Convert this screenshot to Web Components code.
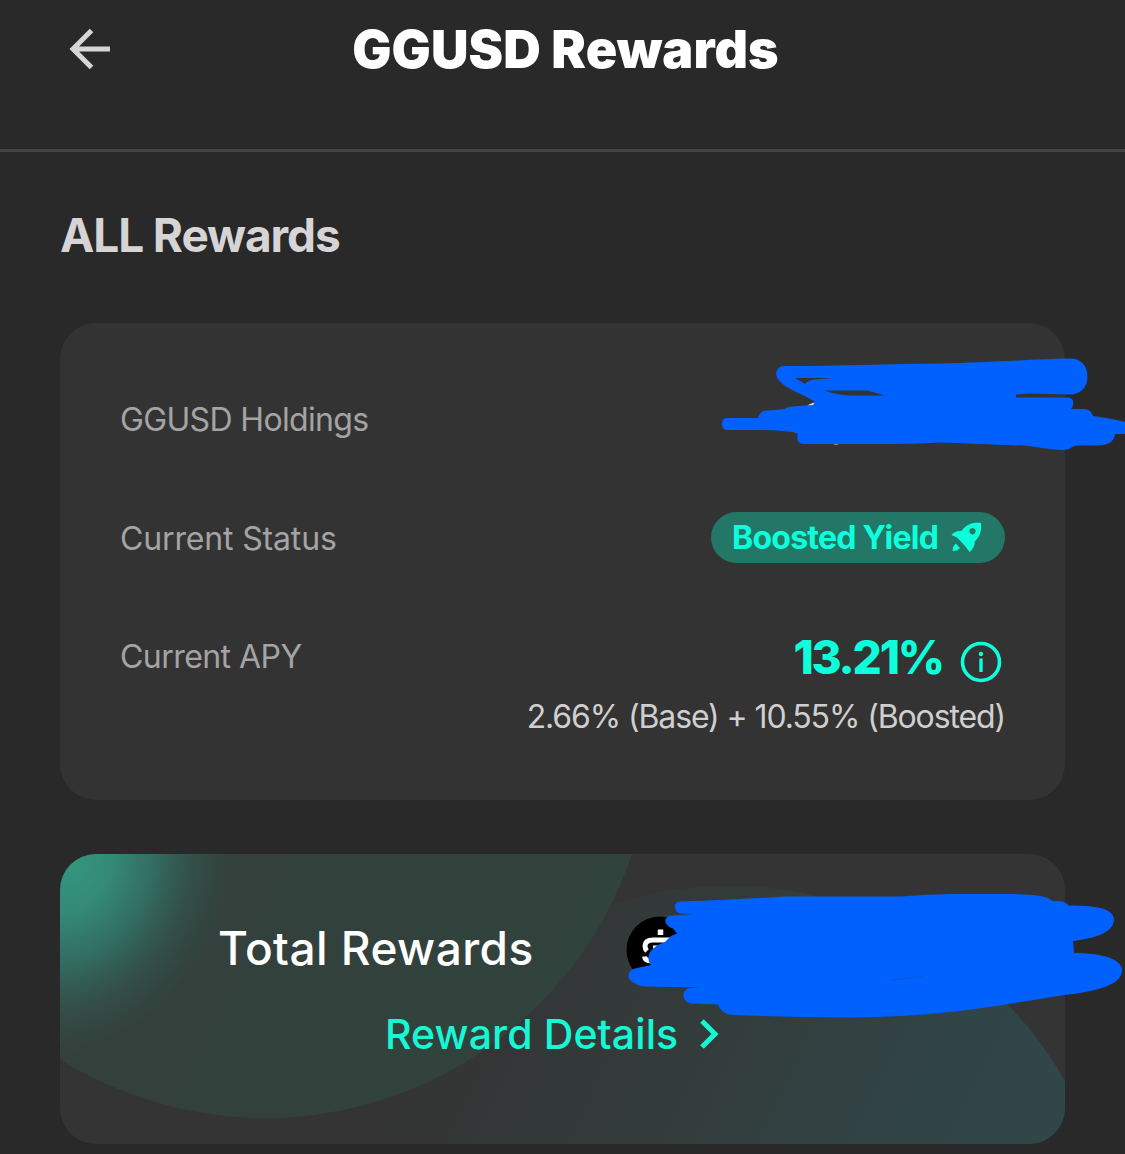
<!DOCTYPE html>
<html lang="en">
<head>
<meta charset="utf-8">
<title>GGUSD Rewards</title>
<style>
  body {
    margin: 0;
    background: #292929;
    font-family: Inter, "Liberation Sans", sans-serif;
  }
</style>
</head>
<body>
<rewards-page>
  <page-header slot="header">GGUSD Rewards</page-header>
  <section-title>ALL Rewards</section-title>
  <info-card>
    <info-row label="GGUSD Holdings" style="--ls:-0.65px"></info-row>
    <info-row label="Current Status" style="--ls:-0.15px"><status-badge>Boosted Yield</status-badge></info-row>
    <info-row label="Current APY" style="--ls:-0.55px"><apy-value value="13.21%">2.66% (Base) + 10.55% (Boosted)</apy-value></info-row>
  </info-card>
  <total-card label="Total Rewards">Reward Details</total-card>
  <ink-layer slot="ink"></ink-layer>
</rewards-page>

<script>
class BaseElement extends HTMLElement {
  constructor() {
    super();
    this.attachShadow({ mode: 'open' });
  }

  connectedCallback() {
    this.shadowRoot.innerHTML = this.template();
  }
}

class RewardsPage extends BaseElement {
  template() {
    return `
      <style>
        :host {
          display: block;
          position: relative;
          width: 1125px;
          height: 1154px;
          overflow: hidden;
        }

        main {
          display: flex;
          flex-direction: column;
          padding: 0 60px;
        }
      </style>
      <slot name="header"></slot>
      <main><slot></slot></main>
      <slot name="ink"></slot>
    `;
  }
}

class PageHeader extends BaseElement {
  template() {
    return `
      <style>
        :host {
          display: grid;
          grid-template-columns: 180px 1fr 180px;
          align-items: center;
          box-sizing: border-box;
          height: 152px;
          padding-bottom: 52px;
          border-bottom: 3px solid #49433f;
        }

        svg {
          margin-left: 68px;
        }

        h1 {
          margin: 0;
          padding: 2px 0 0 6px;
          color: #fff;
          font-size: 52px;
          font-weight: 900;
          letter-spacing: 0.1px;
          line-height: 64px;
          text-align: center;
          white-space: nowrap;
        }
      </style>
      <svg width="44" height="44" viewBox="0 0 44 44" fill="none" stroke="#d6d6d6" stroke-width="5">
        <path d="M42 22H6M23.500 3.500L5 22L23.500 40.500"/>
      </svg>
      <h1><slot></slot></h1>
    `;
  }
}

class SectionTitle extends BaseElement {
  template() {
    return `
      <style>
        :host {
          display: block;
          padding: 55px 0 60px;
          color: #d6d4d4;
          font-size: 46px;
          font-weight: 700;
          line-height: 56px;
          letter-spacing: -1.1px;
        }
      </style>
      <slot></slot>
    `;
  }
}

class InfoCard extends BaseElement {
  template() {
    return `
      <style>
        :host {
          display: flex;
          flex-direction: column;
          box-sizing: border-box;
          width: 1005px;
          height: 477px;
          padding: 37px 60px;
          border-radius: 36px;
          background: #333;
        }
      </style>
      <slot></slot>
    `;
  }
}

class InfoRow extends BaseElement {
  template() {
    return `
      <style>
        :host {
          display: flex;
          justify-content: space-between;
          height: 118.5px;
        }

        .label {
          color: #a5a3a3;
          font-size: 32px;
          line-height: 120px;
          letter-spacing: var(--ls, 0);
          white-space: nowrap;
        }

        .value {
          display: flex;
          align-items: flex-start;
        }
      </style>
      <span class="label">${this.getAttribute('label')}</span>
      <div class="value"><slot></slot></div>
    `;
  }
}

class StatusBadge extends BaseElement {
  template() {
    return `
      <style>
        :host {
          display: flex;
          align-items: center;
          justify-content: space-between;
          box-sizing: border-box;
          width: 294px;
          height: 51px;
          margin-top: 33px;
          padding: 0 23px 0 21px;
          border-radius: 26px;
          background: #237767;
          color: #0dffdb;
          font-size: 32px;
          font-weight: 700;
          letter-spacing: -0.75px;
          white-space: nowrap;
        }
      </style>
      <span><slot></slot></span>
      <svg width="31" height="31" viewBox="0 0 31 31" fill="currentColor">
        <path fill-rule="evenodd" d="M30 1C22 0 15.500 2 10.500 9C7 8.500 3 9.500 0.500 13L6 15.500L14 24L18.700 30C21 28 23.500 25 23.800 19.500C29 14.500 31 8.500 30 1ZM21.500 6A3.200 3.200 0 1 1 21.490 6Z"/>
        <path d="M4.500 21.500L9 26L6 28.500L1.500 29Q1.800 24 4.500 21.500Z"/>
      </svg>
    `;
  }
}

class ApyValue extends BaseElement {
  template() {
    return `
      <style>
        :host {
          display: flex;
          flex-direction: column;
          align-items: flex-end;
          padding-top: 30px;
        }

        .top {
          display: flex;
          align-items: center;
          gap: 17px;
          height: 60px;
          padding-right: 3px;
          color: #0dffdb;
        }

        .value {
          font-size: 46px;
          font-weight: 800;
          letter-spacing: -2.2px;
        }

        svg {
          margin-top: 9px;
        }

        .detail {
          color: #d0cece;
          font-size: 32px;
          line-height: 40px;
          margin-top: 10px;
          letter-spacing: -1.12px;
          white-space: nowrap;
        }
      </style>
      <div class="top">
        <span class="value">${this.getAttribute('value')}</span>
        <svg width="42" height="42" viewBox="0 0 42 42">
          <circle cx="21" cy="21" r="18.500" fill="none" stroke="currentColor" stroke-width="3.600"/>
          <circle cx="21" cy="13" r="2.200" fill="currentColor"/>
          <path d="M21 17.500V31" stroke="currentColor" stroke-width="3.400"/>
        </svg>
      </div>
      <div class="detail"><slot></slot></div>
    `;
  }
}

class TotalCard extends BaseElement {
  template() {
    return `
      <style>
        :host {
          display: grid;
          width: 1005px;
          height: 290px;
          margin-top: 54px;
          border-radius: 36px;
          overflow: hidden;
          background: #343434;
        }

        .art, .body {
          grid-area: 1 / 1;
        }

        .body {
          display: flex;
          flex-direction: column;
          padding-top: 60px;
          z-index: 1;
        }

        .total {
          display: flex;
          align-items: center;
          height: 70px;
          padding-left: 158px;
          color: #fff;
          font-size: 46px;
          font-weight: 500;
          white-space: nowrap;
        }

        .label {
          width: 408px;
          padding-bottom: 2px;
          letter-spacing: 0.45px;
        }

        .coin {
          margin-top: 2px;
        }

        .details {
          display: flex;
          align-items: center;
          height: 50px;
          margin-top: 25px;
          padding-left: 325px;
          gap: 21px;
          color: #16f8d5;
          font-size: 41px;
          font-weight: 500;
          letter-spacing: 0.1px;
          white-space: nowrap;
        }
      </style>
      <svg class="art" width="1005" height="290" viewBox="0 0 1005 290">
        <defs>
          <radialGradient id="glow">
            <stop offset="0" stop-color="#34967f"/>
            <stop offset="0.250" stop-color="#34927d" stop-opacity="0.900"/>
            <stop offset="0.500" stop-color="#328776" stop-opacity="0.650"/>
            <stop offset="0.750" stop-color="#327565" stop-opacity="0.280"/>
            <stop offset="1" stop-color="#336050" stop-opacity="0"/>
          </radialGradient>
          <linearGradient id="left" x1="0.350" y1="0.500" x2="0.950" y2="0.800">
            <stop offset="0" stop-color="#343f3c"/>
            <stop offset="1" stop-color="#31433d"/>
          </linearGradient>
          <linearGradient id="right" gradientUnits="userSpaceOnUse" x1="400" y1="100" x2="900" y2="340">
            <stop offset="0" stop-color="#343434"/>
            <stop offset="0.500" stop-color="#333d3c"/>
            <stop offset="1" stop-color="#304649"/>
          </linearGradient>
          <clipPath id="disc"><circle cx="205" cy="-123" r="387"/></clipPath>
        </defs>
        <circle cx="670" cy="417" r="385" fill="url(#right)"/>
        <circle cx="205" cy="-123" r="387" fill="url(#left)"/>
        <ellipse cx="10" cy="10" rx="162" ry="198" transform="rotate(20 10 10)" fill="url(#glow)" clip-path="url(#disc)"/>
      </svg>
      <div class="body">
        <div class="total">
          <span class="label">${this.getAttribute('label')}</span>
          <svg class="coin" width="68" height="68" viewBox="0 0 68 68" fill="none" stroke="#fff">
            <circle cx="34" cy="34" r="33.500" fill="#000" stroke="none"/>
            <path d="M34.500 13.500V19M34.500 48V54" stroke-width="5.500"/>
            <path d="M50 24H27Q19 24 19 30Q19 33 21 35" stroke-width="5"/>
            <path d="M27 31H45" stroke-width="3"/>
            <path d="M18.500 40.500Q19 45 26 45H44" stroke-width="5"/>
          </svg>
        </div>
        <div class="details">
          <slot></slot>
          <svg width="20" height="32" viewBox="0 0 20 32" fill="none" stroke="currentColor" stroke-width="5">
            <path d="M3 3L16 16L3 29"/>
          </svg>
        </div>
      </div>
    `;
  }
}

// Marker strokes that hide the balances, drawn over both cards
class InkLayer extends BaseElement {
  template() {
    return `
      <style>
        :host {
          display: block;
          position: absolute;
          inset: 0;
          z-index: 2;
          pointer-events: none;
        }
      </style>
      <svg width="1125" height="1154" viewBox="0 0 1125 1154" fill="#0061ff">
        <path fill="#ddd" d="M807 406Q811 402.500 816 402.500V408ZM833 443H840L838 444.500H834Z"/>
        <path fill-rule="evenodd" d="M783 366C840 366 890 364 940 363.500C990 362 1040 359 1070 358.500C1081 358.500 1087.500 366 1087.500 376C1087.500 388 1080 394.500 1070 394.500L1030 393.500L1016 394.500V397.500H1068C1074 398 1075 404 1071 409H1084C1090 409 1092 413 1093 416Q1110 418 1126 422V434H1115C1114 442 1108 445.500 1096 445.500H1077C1070 447 1071 450 1062 450C1050 449.500 1038 447 1023 445.500C995 445 965 443 940 442.500Q915 444 890 444H804C798 444 796 439 798 434L793 432Q776 430 758 430H727C720 430 720 418 727 418H758C760 412 763 410 769 410.500L785 409C788 406 792 407 798 406L813 405L815 402C805 394 776 387 776 373C777 369 780 366 783 366ZM795 378L805 384Q808 380 815 379.500L833 378ZM824 390.500Q840 396 857 395.500H885L867 390.500Z"/>
        <path d="M680 901.500Q740 899.500 785 896.500H903C930 893.500 960 894 1000 894C1030 894 1048 895 1052 901C1061 901 1064 901 1069 905.500C1095 905.500 1114 908 1114 920C1113 933 1095 938 1073 941L1074 953C1105 953 1122 960 1122 970C1122 985 1098 991 1065 995C1010 1003 950 1017 850 1017.500Q780 1017 735 1015C724 1015 720 1010 718 1004.500L691 1003.500C681 1001 681 989 691 988L701 987.500L645 986.500C624 983 625 970 637 968L651 965C645 957 650 950 658 945L665 942C669 938 671 935 677 933.500L673 928.500C662 925 664 916 672 915.500L693 914L680 913.500C673 911.500 673 902 680 901.500Z"/>
        <path d="M891 980L922 976.500" stroke="#0a57d6" stroke-width="1"/>
      </svg>
    `;
  }
}

customElements.define('rewards-page', RewardsPage);
customElements.define('page-header', PageHeader);
customElements.define('section-title', SectionTitle);
customElements.define('info-card', InfoCard);
customElements.define('info-row', InfoRow);
customElements.define('status-badge', StatusBadge);
customElements.define('apy-value', ApyValue);
customElements.define('total-card', TotalCard);
customElements.define('ink-layer', InkLayer);
</script>
</body>
</html>
